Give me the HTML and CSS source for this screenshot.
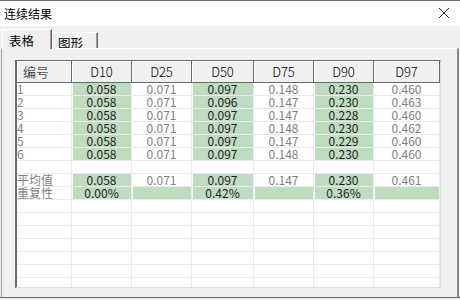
FILE: index.html
```html
<!DOCTYPE html>
<html>
<head>
<meta charset="utf-8">
<link rel="stylesheet" href="styles.css">
</head>
<body>
<div class="window">
  <div class="titlebar">
    <span class="title">连续结果</span>
    <svg class="close" width="12" height="12" viewBox="0 0 12 12"><path d="M1 1 L11 11 M11 1 L1 11" stroke="#222" stroke-width="1" fill="none"/></svg>
  </div>
  <div class="tabs">
    <div class="tab active">表格</div>
    <div class="tab">图形</div>
  </div>
  <div class="panel">
    <div class="grid">
      <div class="row head">
        <div class="hc left">编号</div><div class="hc">D10</div><div class="hc">D25</div><div class="hc">D50</div><div class="hc">D75</div><div class="hc">D90</div><div class="hc">D97</div>
      </div>
      <div class="row"><div class="c lbl">1</div><div class="c g">0.058</div><div class="c">0.071</div><div class="c g">0.097</div><div class="c">0.148</div><div class="c g">0.230</div><div class="c">0.460</div></div>
      <div class="row"><div class="c lbl">2</div><div class="c g">0.058</div><div class="c">0.071</div><div class="c g">0.096</div><div class="c">0.147</div><div class="c g">0.230</div><div class="c">0.463</div></div>
      <div class="row"><div class="c lbl">3</div><div class="c g">0.058</div><div class="c">0.071</div><div class="c g">0.097</div><div class="c">0.147</div><div class="c g">0.228</div><div class="c">0.460</div></div>
      <div class="row"><div class="c lbl">4</div><div class="c g">0.058</div><div class="c">0.071</div><div class="c g">0.097</div><div class="c">0.148</div><div class="c g">0.230</div><div class="c">0.462</div></div>
      <div class="row"><div class="c lbl">5</div><div class="c g">0.058</div><div class="c">0.071</div><div class="c g">0.097</div><div class="c">0.147</div><div class="c g">0.229</div><div class="c">0.460</div></div>
      <div class="row"><div class="c lbl">6</div><div class="c g">0.058</div><div class="c">0.071</div><div class="c g">0.097</div><div class="c">0.148</div><div class="c g">0.230</div><div class="c">0.460</div></div>
      <div class="row"><div class="c"></div><div class="c"></div><div class="c"></div><div class="c"></div><div class="c"></div><div class="c"></div><div class="c"></div></div>
      <div class="row"><div class="c lbl">平均值</div><div class="c g">0.058</div><div class="c">0.071</div><div class="c g">0.097</div><div class="c">0.147</div><div class="c g">0.230</div><div class="c">0.461</div></div>
      <div class="row"><div class="c lbl">重复性</div><div class="c g">0.00%</div><div class="c g"></div><div class="c g">0.42%</div><div class="c g"></div><div class="c g">0.36%</div><div class="c g"></div></div>
      <div class="row"><div class="c"></div><div class="c"></div><div class="c"></div><div class="c"></div><div class="c"></div><div class="c"></div><div class="c"></div></div>
      <div class="row"><div class="c"></div><div class="c"></div><div class="c"></div><div class="c"></div><div class="c"></div><div class="c"></div><div class="c"></div></div>
      <div class="row"><div class="c"></div><div class="c"></div><div class="c"></div><div class="c"></div><div class="c"></div><div class="c"></div><div class="c"></div></div>
      <div class="row"><div class="c"></div><div class="c"></div><div class="c"></div><div class="c"></div><div class="c"></div><div class="c"></div><div class="c"></div></div>
      <div class="row"><div class="c"></div><div class="c"></div><div class="c"></div><div class="c"></div><div class="c"></div><div class="c"></div><div class="c"></div></div>
      <div class="row"><div class="c"></div><div class="c"></div><div class="c"></div><div class="c"></div><div class="c"></div><div class="c"></div><div class="c"></div></div>
      <div class="row"><div class="c"></div><div class="c"></div><div class="c"></div><div class="c"></div><div class="c"></div><div class="c"></div><div class="c"></div></div>
    </div>
  </div>
</div>
</body>
</html>
```
FILE: styles.css
```css
* { box-sizing: border-box; }
html, body { margin: 0; padding: 0; }
body {
  width: 460px;
  height: 300px;
  overflow: hidden;
  background: #f0f0f0;
  font-family: "Noto Sans CJK SC", "Noto Sans", sans-serif;
  font-size: 12px;
}
.window {
  width: 460px;
  height: 298px;
  background: #f0f0f0;
  border-top: 1px solid #707070;
  border-bottom: 1px solid #646464;
  display: flex;
  flex-direction: column;
}
.titlebar {
  height: 25px;
  background: #fff;
  display: flex;
  align-items: center;
  justify-content: space-between;
  padding: 0 10px 0 4px;
  flex: none;
}
.title {
  font-size: 12px;
  line-height: 14px;
  color: #000;
}
.close { display: block; margin-top: -1px; }
.tabs {
  height: 22px;
  display: flex;
  align-items: flex-end;
  padding-left: 2px;
  flex: none;
}
.tab {
  font-size: 12.5px;
  line-height: 14px;
  padding: 3px 5px 0 6px;
  height: 16px;
  width: 46px;
  border-top: 1px solid #fff;
  border-right: 1px solid #696969;
  color: #000;
  box-shadow: inset -1px 0 0 #a0a0a0;
}
.tab.active {
  height: 20px;
  width: 50px;
  padding-top: 4px;
  border-left: 1px solid #fff;
  position: relative;
  z-index: 1;
  margin-bottom: -1px;
  background: #f0f0f0;
}
.panel {
  flex: 1;
  margin: 0 1px 0 1px;
  border-top: 1px solid #fff;
  border-left: 1px solid #a0a0a0;
  border-right: 2px solid #8a8a8a;
  padding: 11px 0 0 13px;
}
.grid {
  width: 426px;
  height: 228px;
  overflow: hidden;
  background: #fff;
  border-left: 2px solid #6b6b6b;
  border-top: 1px solid #6b6b6b;
  border-right: 1px solid #dcdcdc;
  border-bottom: 1px solid #dcdcdc;
}
.row {
  display: grid;
  grid-template-columns: 55px 60px 60px 62px 60px 60px 66px;
  height: 13px;
}
.row.head { height: 22px; }
.hc {
  background: #f0f0f0;
  border-right: 1px solid #696969;
  border-bottom: 1px solid #696969;
  box-shadow: inset 1px 1px 0 #fff;
  text-align: center;
  font-size: 13px;
  font-weight: 300;
  line-height: 21px;
  color: #000;
}
.hc.left { text-align: left; padding-left: 6px; }
.c {
  border-right: 1px solid #ebebeb;
  border-bottom: 1px solid #ebebeb;
  text-align: center;
  font-size: 12px;
  line-height: 12px;
  color: #808080;
  white-space: nowrap;
}
.c.g {
  background: #c0dcc0;
  color: #1c1c1c;
  box-shadow: inset 1px 0 0 #fff;
}
.c.lbl {
  text-align: left;
  padding-left: 0;
}
```
